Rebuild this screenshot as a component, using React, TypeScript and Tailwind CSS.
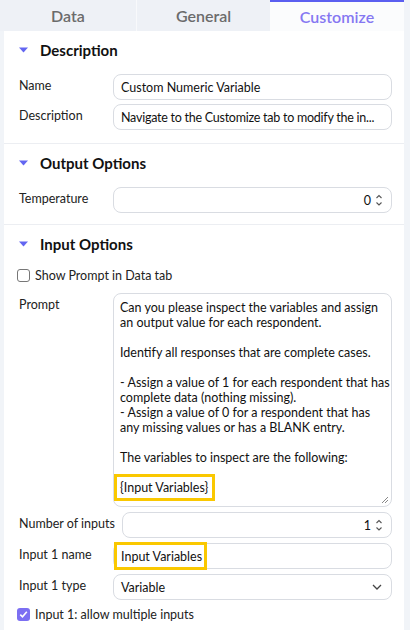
import React from "react";

function Caret() {
  return (
    <svg width="9" height="6" viewBox="0 0 9 6" className="shrink-0">
      <path d="M0 0.5h9L4.5 5.5z" fill="#6366f1" />
    </svg>
  );
}

function Spinner() {
  return (
    <svg width="8" height="16" viewBox="0 0 8 16" className="shrink-0">
      <path d="M1.5 6l2.5-2.5L6.5 6" fill="none" stroke="#555" strokeWidth="1.1" />
      <path d="M1.5 10.5l2.5 2.5 2.5-2.5" fill="none" stroke="#555" strokeWidth="1.1" />
    </svg>
  );
}

function SectionHead({ title }: { title: string }) {
  return (
    <div className="flex items-center gap-[12px] h-[20px] mb-[14px]">
      <Caret />
      <span className="text-[15px] font-bold text-[#111]">{title}</span>
    </div>
  );
}

function Row({ label, children }: { label: string; children: React.ReactNode }) {
  return (
    <div className="flex items-start gap-[7px]">
      <div className="min-w-[87px] pt-[4px] text-[#222] whitespace-nowrap">{label}</div>
      <div className="flex-1 min-w-0">{children}</div>
    </div>
  );
}

function TextBox({ children }: { children: React.ReactNode }) {
  return (
    <div className="h-[26px] flex items-center px-[7px] border border-[#d9dce2] rounded-lg bg-white text-[#111] whitespace-nowrap">
      {children}
    </div>
  );
}

function NumberBox({ value }: { value: string }) {
  return (
    <div className="h-[26px] flex items-center justify-end gap-[4px] pl-[7px] pr-[8px] border border-[#d9dce2] rounded-lg bg-white text-[#111]">
      <span>{value}</span>
      <Spinner />
    </div>
  );
}

export default function App() {
  return (
    <div
      className="w-[410px] h-[630px] bg-[#f1f4f8] overflow-hidden text-[12.5px] leading-[15px]"
      style={{ fontFamily: "Lato, 'Noto Sans', sans-serif" }}
    >
      <div className="flex h-[31px] w-[404px] text-[16px] font-semibold">
        <div className="w-[137px] flex items-center justify-center text-[#6b6b6b] bg-[#eef1f6] border-r border-[#f8f9fb]">
          Data
        </div>
        <div className="w-[133px] flex items-center justify-center text-[#6b6b6b] bg-[#eef1f6]">
          General
        </div>
        <div className="flex-1 flex items-center justify-center text-[#8577f2] bg-[#fbfcfd] border-t-2 border-[#5b5ff0]">
          Customize
        </div>
      </div>

      <div className="ml-[4px] w-[400px] bg-white">
        <section className="pl-[15px] pr-[12px] pt-[9px] pb-[13px] border-b border-[#eceef2]">
          <SectionHead title="Description" />
          <div className="flex flex-col gap-[4px]">
            <Row label="Name">
              <TextBox>Custom Numeric Variable</TextBox>
            </Row>
            <Row label="Description">
              <TextBox>
                <span className="tracking-[-0.25px]">Navigate to the Customize tab to modify the in...</span>
              </TextBox>
            </Row>
          </div>
        </section>

        <section className="pl-[15px] pr-[12px] pt-[9px] pb-[11px] border-b border-[#eceef2]">
          <SectionHead title="Output Options" />
          <Row label="Temperature">
            <NumberBox value="0" />
          </Row>
        </section>

        <section className="pl-[15px] pr-[12px] pt-[9px] pb-[12px]">
          <SectionHead title="Input Options" />
          <label className="flex items-center gap-[5px] -ml-[2px] mb-[10px] text-[#222]">
            <span className="w-[13px] h-[13px] rounded-[3px] border border-[#777] bg-white" />
            Show Prompt in Data tab
          </label>

          <div className="flex flex-col gap-[5px]">
            <Row label="Prompt">
              <div className="relative h-[214px] border border-[#d9dce2] rounded-lg bg-white pl-[6px] pr-[1px] pt-[6px] text-[#111] whitespace-pre-wrap">
                {"Can you please inspect the variables and assign an output value for each respondent.\n\nIdentify all responses that are complete cases.\n\n- Assign a value of 1 for each respondent that has complete data (nothing missing).\n- Assign a value of 0 for a respondent that has any missing values or has a BLANK entry.\n\nThe variables to inspect are the following:\n\n"}
                <span className="relative">
                  {"{Input Variables}"}
                  <span className="absolute -left-[6px] -right-[7px] -top-[6px] -bottom-[6px] border-[3px] border-[#fac800]" />
                </span>
                <svg width="8" height="8" viewBox="0 0 8 8" className="absolute right-[2px] bottom-[2px]">
                  <path d="M1 7L7 1M4 7L7 4" stroke="#888" strokeWidth="1" />
                </svg>
              </div>
            </Row>

            <Row label="Number of inputs">
              <NumberBox value="1" />
            </Row>

            <Row label="Input 1 name">
              <div className="relative">
                <TextBox>Input Variables</TextBox>
                <span className="absolute left-[1px] -top-[1px] -bottom-[1px] w-[93px] border-[3px] border-[#fac800]" />
              </div>
            </Row>

            <Row label="Input 1 type">
              <div className="h-[26px] flex items-center justify-between px-[7px] pr-[9px] border border-[#d9dce2] rounded-lg bg-white text-[#111]">
                <span>Variable</span>
                <svg width="10" height="6" viewBox="0 0 10 6">
                  <path d="M1 1l4 4 4-4" fill="none" stroke="#444" strokeWidth="1.3" />
                </svg>
              </div>
            </Row>
          </div>

          <label className="flex items-center gap-[5px] -ml-[2px] mt-[7px] text-[#222]">
            <span className="w-[13px] h-[13px] rounded-[3px] bg-[#7c6ff2] flex items-center justify-center">
              <svg width="9" height="9" viewBox="0 0 9 9">
                <path d="M1.3 4.6l2.2 2.2L7.8 1.8" fill="none" stroke="white" strokeWidth="1.6" />
              </svg>
            </span>
            Input 1: allow multiple inputs
          </label>
        </section>
      </div>
    </div>
  );
}
